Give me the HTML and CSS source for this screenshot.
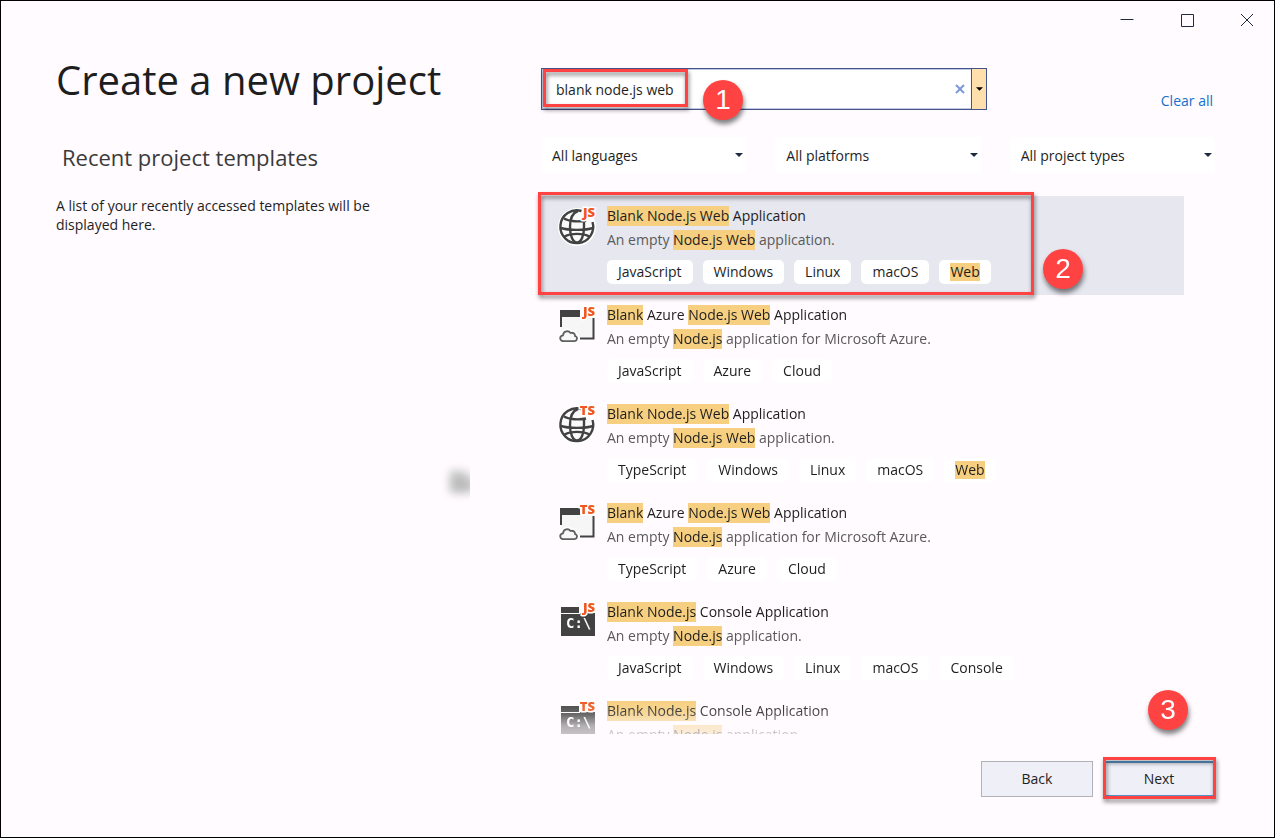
FILE: index.html
```html
<!DOCTYPE html>
<html lang="en">
<head>
<meta charset="utf-8">
<title>Create a new project</title>
<link rel="stylesheet" href="styles.css">
</head>
<body>
<svg class="defs" aria-hidden="true">
  <symbol id="globe" viewBox="0 0 40 40">
    <circle class="halo" cx="19" cy="21" r="17"/>
    <g class="line">
      <path d="M23.500 5A16.400 16.400 0 1 0 34.500 16"/>
      <path d="M20 5C14 7 12 13 12 21C12 29 14.500 36.500 19 36.500C23.500 36.500 26 29 26 21V14"/>
      <path d="M6 12.500C11 15.500 21 16 28 14.500M3 22C10 24.500 28 24.500 35 22M6.500 30.500C13 27 25 27 31.500 30.500"/>
    </g>
  </symbol>
  <symbol id="cloud-app" viewBox="0 0 40 40">
    <path d="M3 10H35V32H3Z" fill="#f6f6f6"/>
    <path d="M2 5H22V12H2Z" fill="#424242"/>
    <path d="M3 11V22M35.500 13V33.500H22" class="frame"/>
    <path d="M6 36.200C1.500 36.200 .8 31 5 30.300C5.500 26 10.500 25.100 12.500 28C15.500 27 17.300 29.300 17 31C20 31.800 19.500 36.200 16 36.200Z" class="cloud-edge"/>
    <path d="M6 36.200C1.500 36.200 .8 31 5 30.300C5.500 26 10.500 25.100 12.500 28C15.500 27 17.300 29.300 17 31C20 31.800 19.500 36.200 16 36.200Z" class="cloud"/>
  </symbol>
  <symbol id="console" viewBox="0 0 40 40">
    <path d="M3 5H21V11H3ZM3 12H37V34H3Z" fill="#424242"/>
    <path d="M22 11H37V12H22Z" fill="#424242"/>
  </symbol>
</svg>

<div class="window">
  <header class="titlebar">
    <button type="button" class="caption" aria-label="Minimize"><svg width="14" height="14" viewBox="0 0 14 14"><path d="M0.500 6.500H13.500"/></svg></button>
    <button type="button" class="caption" aria-label="Maximize"><svg width="14" height="14" viewBox="0 0 14 14"><path d="M1.500 1.500H13.500V13.500H1.500Z"/></svg></button>
    <button type="button" class="caption close" aria-label="Close"><svg width="14" height="14" viewBox="0 0 14 14"><path d="M1 1L13 13M13 1L1 13"/></svg></button>
  </header>

  <main class="content">
    <section class="recent">
      <h1>Create a new project</h1>
      <h2>Recent project templates</h2>
      <p>A list of your recently accessed templates will be displayed here.</p>
      <div class="smudge"></div>
    </section>

    <section class="templates">
      <div class="search-row">
        <div class="search">
          <input type="text" value="blank node.js web" aria-label="Search for templates">
          <button type="button" class="clear" aria-label="Clear search"><svg width="10" height="10" viewBox="0 0 10 10"><path d="M1 1L9 9M9 1L1 9"/></svg></button>
          <button type="button" class="history" aria-label="Search history"><svg width="7" height="4" viewBox="0 0 8 4"><path d="M0 0H8L4 4Z"/></svg></button>
          <span class="callout callout-search"></span>
          <span class="badge badge-one">1</span>
        </div>
        <a class="clear-all" href="#">Clear all</a>
      </div>

      <div class="filters">
        <div class="filter"><select aria-label="Language"><option>All languages</option></select><svg width="8" height="4" viewBox="0 0 8 4"><path d="M0 0H8L4 4Z"/></svg></div>
        <div class="filter"><select aria-label="Platform"><option>All platforms</option></select><svg width="8" height="4" viewBox="0 0 8 4"><path d="M0 0H8L4 4Z"/></svg></div>
        <div class="filter"><select aria-label="Project type"><option>All project types</option></select><svg width="8" height="4" viewBox="0 0 8 4"><path d="M0 0H8L4 4Z"/></svg></div>
      </div>

      <div class="results">
        <ul class="list">
          <li class="item selected">
            <svg class="icon" viewBox="0 0 40 40"><use href="#globe"/><text x="37" y="11" class="lang">JS</text></svg>
            <div class="info">
              <h3><mark>Blank Node.js Web</mark> Application</h3>
              <p>An empty <mark>Node.js Web</mark> application.</p>
              <div class="tags"><span>JavaScript</span><span>Windows</span><span>Linux</span><span>macOS</span><span><mark>Web</mark></span></div>
            </div>
          </li>
          <li class="item">
            <svg class="icon" viewBox="0 0 40 40"><use href="#cloud-app"/><text x="37" y="11" class="lang">JS</text></svg>
            <div class="info">
              <h3><mark>Blank</mark> Azure <mark>Node.js Web</mark> Application</h3>
              <p>An empty <mark>Node.js</mark> application for Microsoft Azure.</p>
              <div class="tags"><span>JavaScript</span><span>Azure</span><span>Cloud</span></div>
            </div>
          </li>
          <li class="item">
            <svg class="icon" viewBox="0 0 40 40"><use href="#globe"/><text x="37" y="11" class="lang">TS</text></svg>
            <div class="info">
              <h3><mark>Blank Node.js Web</mark> Application</h3>
              <p>An empty <mark>Node.js Web</mark> application.</p>
              <div class="tags"><span>TypeScript</span><span>Windows</span><span>Linux</span><span>macOS</span><span><mark>Web</mark></span></div>
            </div>
          </li>
          <li class="item">
            <svg class="icon" viewBox="0 0 40 40"><use href="#cloud-app"/><text x="37" y="11" class="lang">TS</text></svg>
            <div class="info">
              <h3><mark>Blank</mark> Azure <mark>Node.js Web</mark> Application</h3>
              <p>An empty <mark>Node.js</mark> application for Microsoft Azure.</p>
              <div class="tags"><span>TypeScript</span><span>Azure</span><span>Cloud</span></div>
            </div>
          </li>
          <li class="item">
            <svg class="icon" viewBox="0 0 40 40"><use href="#console"/><text x="8" y="26" class="prompt">C:\</text><text x="37" y="10" class="lang">JS</text></svg>
            <div class="info">
              <h3><mark>Blank Node.js</mark> Console Application</h3>
              <p>An empty <mark>Node.js</mark> application.</p>
              <div class="tags"><span>JavaScript</span><span>Windows</span><span>Linux</span><span>macOS</span><span>Console</span></div>
            </div>
          </li>
          <li class="item">
            <svg class="icon" viewBox="0 0 40 40"><use href="#console"/><text x="8" y="26" class="prompt">C:\</text><text x="37" y="10" class="lang">TS</text></svg>
            <div class="info">
              <h3><mark>Blank Node.js</mark> Console Application</h3>
              <p>An empty <mark>Node.js</mark> application.</p>
            </div>
          </li>
        </ul>
        <span class="callout callout-item"></span>
        <span class="badge badge-two">2</span>
      </div>

      <footer class="actions">
        <button type="button" class="action">Back</button>
        <div class="next">
          <button type="button" class="action primary">Next</button>
          <span class="callout callout-next"></span>
          <span class="badge badge-three">3</span>
        </div>
      </footer>
    </section>
  </main>
</div>
</body>
</html>
```
FILE: styles.css
```css
* { box-sizing: border-box; }

body {
  margin: 0;
  background: #fffbff;
  color: #1e1e1e;
  font-family: "Open Sans", "Noto Sans", sans-serif;
  font-size: 14px;
  line-height: 19px;
}

h1, h2, h3, p, ul { margin: 0; padding: 0; font-weight: 400; }
button, input, select { font: inherit; color: inherit; margin: 0; }
.defs { position: absolute; width: 0; height: 0; }

.window {
  display: flex;
  flex-direction: column;
  height: 100vh;
  border: 1px solid #000;
}

.titlebar {
  display: flex;
  justify-content: flex-end;
  flex: none;
  height: 40px;
  margin-right: -3px;
}
.caption {
  display: flex;
  align-items: center;
  justify-content: center;
  width: 60px;
  height: 38px;
  padding: 0;
  border: 0;
  background: none;
}
.caption svg { fill: none; stroke: #1f2b3d; stroke-width: 1; }

.content {
  display: grid;
  grid-template-columns: 540px minmax(0, 1fr);
  flex: 1;
  min-height: 0;
}

.recent { position: relative; padding: 11px 0 0 55px; }
.recent h1 { font-size: 40px; line-height: 56px; white-space: nowrap; }
.recent h2 { margin-top: 34px; padding-left: 6px; font-size: 22px; line-height: 30px; color: #3a3a3a; }
.recent p { width: 335px; margin-top: 24px; }
.smudge {
  position: absolute;
  left: 434px;
  top: 415px;
  width: 35px;
  height: 50px;
  overflow: hidden;
}
.smudge::before {
  content: "";
  position: absolute;
  left: 14px;
  top: 14px;
  width: 30px;
  height: 23px;
  background: radial-gradient(circle at 12px 16px, #bbb 8px, transparent 18px), radial-gradient(circle at 7px 6px, #ccc 4px, transparent 10px);
  filter: blur(4px);
}

.templates {
  display: flex;
  flex-direction: column;
  min-height: 0;
  padding: 27px 59px 40px 0;
}

.search-row { display: flex; justify-content: space-between; flex: none; }
.search {
  position: relative;
  display: flex;
  flex: 0 1 446px;
  height: 42px;
  background: #fff;
  border: 1px solid #45538c;
  box-shadow: inset 0 0 0 1px #c3cae4;
}
.search input {
  flex: 1;
  min-width: 0;
  padding: 0 14px;
  border: 0;
  outline: 0;
  background: none;
}
.clear, .history {
  display: flex;
  align-items: center;
  justify-content: center;
  padding: 0;
  border: 0;
  background: none;
}
.clear { width: 22px; }
.clear svg { fill: none; stroke: #7a98dc; stroke-width: 2; }
.history { width: 15px; background: #ffe0ac; border-left: 1px solid #45538c; }
.clear-all { align-self: flex-end; margin-right: 2px; color: #1470cc; text-decoration: none; }

.filters {
  display: grid;
  grid-template-columns: repeat(3, 1fr);
  gap: 29px;
  flex: none;
  margin-top: 27px;
}
.filter { position: relative; height: 36px; background: #fff; }
.filter select {
  width: 100%;
  height: 100%;
  padding: 0 24px 0 11px;
  border: 0;
  appearance: none;
  background: none;
}
.filter svg { position: absolute; right: 3px; top: 16px; fill: #1c2a42; pointer-events: none; }

.results { position: relative; flex: 1; min-height: 0; margin-top: 23px; }
.list {
  height: 100%;
  padding-right: 31px;
  overflow: hidden;
  list-style: none;
  -webkit-mask-image: linear-gradient(#000 calc(100% - 34px), rgba(0, 0, 0, .8) calc(100% - 20px), rgba(0, 0, 0, .4) calc(100% - 8px), rgba(0, 0, 0, .3));
  mask-image: linear-gradient(#000 calc(100% - 34px), rgba(0, 0, 0, .8) calc(100% - 20px), rgba(0, 0, 0, .4) calc(100% - 8px), rgba(0, 0, 0, .3));
}
.item { display: flex; height: 99px; padding: 10px 0 0 17px; }
.selected { background: #e6e7ef; }
.icon { flex: none; width: 40px; height: 40px; margin-right: 9px; overflow: visible; }
.info h3 { font-size: 14px; line-height: 20px; }
.info p { margin-top: 4px; line-height: 20px; color: #5a5a5a; }
.info mark { display: inline-block; background: #f6cf80; color: #1e1e1e; }
.tags { display: flex; gap: 10px; margin-top: 10px; }
.tags span { height: 24px; padding: 0 11px; border-radius: 5px; background: #fff; line-height: 24px; }
.tags mark { line-height: 18px; }

.halo { fill: #fafafa; stroke: #fff; stroke-width: 4; }
.line { fill: none; stroke: #424242; stroke-width: 2.4; }
.frame { fill: none; stroke: #424242; stroke-width: 2; }
.cloud-edge { fill: #fff; stroke: #fff; stroke-width: 5; }
.cloud { fill: #f8f8f8; stroke: #606060; stroke-width: 1.8; }
.prompt { font: 700 14px "DejaVu Sans Mono", monospace; fill: #fff; }
.lang {
  font: 800 13px "Open Sans", sans-serif;
  text-anchor: end;
  fill: #f0561d;
  stroke: #fff;
  stroke-width: 3;
  paint-order: stroke;
}

.actions { display: flex; justify-content: flex-end; gap: 10px; flex: none; margin-top: 27px; }
.action { display: block; width: 112px; height: 36px; padding: 0 0 2px; border: 1px solid #b0b2b8; background: #eeeff7; }
.next { position: relative; }
.primary { border: 2px solid #5b97cf; }

.callout {
  position: absolute;
  border: 3px solid #ff4343;
  filter: drop-shadow(1px 3px 2px rgba(0, 0, 0, .5));
  pointer-events: none;
}
.callout-search { left: 1px; top: 0; width: 145px; height: 38px; }
.callout-item { left: -3px; top: -4px; width: 496px; height: 103px; }
.callout-next { inset: -4px -1px -2px 0; }
.badge {
  position: absolute;
  width: 40px;
  height: 40px;
  border-radius: 50%;
  background: #ff4343;
  color: #fff;
  font: 28px/40px "Liberation Sans", sans-serif;
  text-align: center;
  box-shadow: 1px 4px 5px rgba(0, 0, 0, .5);
}
.badge-one { left: 161px; top: 11px; }
.badge-two { left: 502px; top: 53px; }
.badge-three { left: 45px; top: -71px; }
```
